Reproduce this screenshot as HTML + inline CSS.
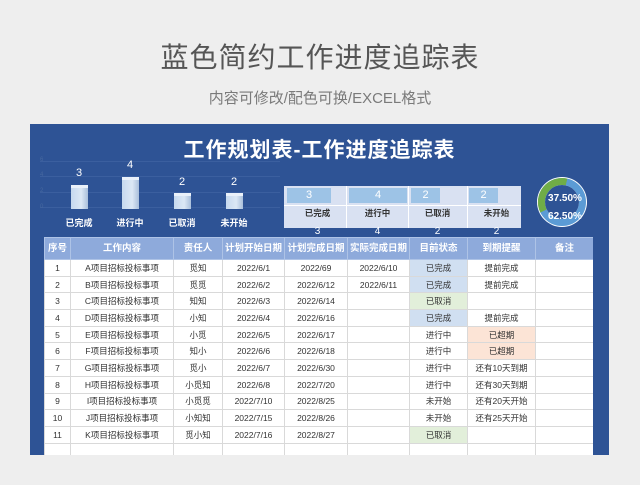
<!DOCTYPE html>
<html><head><meta charset="utf-8"><style>
*{margin:0;padding:0;box-sizing:border-box}
body{width:640px;height:485px;background:#eeeeee;font-family:"Liberation Sans","Noto Sans CJK SC",sans-serif;position:relative;overflow:hidden}
.a{position:absolute}
#t1{left:0;width:640px;top:36px;text-align:center;font-size:28px;color:#555;letter-spacing:1px}
#t2{left:0;width:640px;top:87px;text-align:center;font-size:15px;color:#7a7a7a}
#panel{left:30px;top:124px;width:579px;height:331px;background:#2e5395}
#ptitle{left:30px;width:579px;top:134px;text-align:center;font-size:21px;font-weight:bold;color:#fff;letter-spacing:1px}
.grid{left:40px;width:240px;height:1px;background:#3b5f9f}
.bar{width:17px;background:linear-gradient(90deg,#c6d9ef,#dce8f5 60%,#a9bfdb);border-top:3px solid #eaf1fa}
.bv{width:40px;text-align:center;color:#fff;font-size:11px;line-height:12px}
.bl{width:50px;text-align:center;color:#fff;font-size:9px;font-weight:bold;line-height:11px}
.ax{color:#46689f;font-size:6px;left:40px}
#tw{position:absolute;left:44px;top:237px;width:549px;height:218px;overflow:hidden}
table{border-collapse:collapse;width:549px;table-layout:fixed}
td,th{border:1px solid #d9d9d9;text-align:center;font-size:8.5px;color:#333;height:16.7px;line-height:14px;padding:0;white-space:nowrap;overflow:hidden;font-weight:normal}
th{background:#8eaadb;color:#fff;font-weight:bold;font-size:9.5px;height:22px;border-color:#aec3e6}
td{background:#fff}
.b{background:#d0dff1}.g{background:#e2efda}.o{background:#fce4d6}
.sb{background:#d9e1f2;left:284px;top:186px;width:237px;height:42px}
.sv{top:188px;height:15px;background:#9dc3e6;color:#fff;font-size:11px;text-align:center;line-height:15px}
.sl{top:208px;width:59px;text-align:center;font-size:8.5px;font-weight:bold;color:#333;line-height:11px}
.sn{top:227px;width:59px;text-align:center;font-size:10px;color:#fff;line-height:10px}
</style></head><body>
<div class="a" id="t1">蓝色简约工作进度追踪表</div>
<div class="a" id="t2">内容可修改/配色可换/EXCEL格式</div>
<div class="a" id="panel"></div>
<div class="a" id="ptitle">工作规划表-工作进度追踪表</div>
<div class="a grid" style="top:161px"></div><div class="a grid" style="top:176px"></div><div class="a grid" style="top:192px"></div><div class="a grid" style="top:207px"></div>
<div class="a ax" style="top:157px">6</div><div class="a ax" style="top:172px">4</div><div class="a ax" style="top:188px">2</div><div class="a ax" style="top:204px">0</div>
<div class="a bar" style="left:71px;top:185px;height:24px"></div>
<div class="a bar" style="left:122px;top:177px;height:32px"></div>
<div class="a bar" style="left:174px;top:193px;height:16px"></div>
<div class="a bar" style="left:226px;top:193px;height:16px"></div>
<div class="a bv" style="left:59px;top:167px">3</div><div class="a bv" style="left:110px;top:159px">4</div><div class="a bv" style="left:162px;top:176px">2</div><div class="a bv" style="left:214px;top:176px">2</div>
<div class="a bl" style="left:54px;top:218px">已完成</div><div class="a bl" style="left:105px;top:218px">进行中</div><div class="a bl" style="left:157px;top:218px">已取消</div><div class="a bl" style="left:209px;top:218px">未开始</div>
<div class="a sb"></div>
<div class="a" style="left:346px;top:186px;width:1px;height:42px;background:#fff"></div>
<div class="a" style="left:408px;top:186px;width:1px;height:42px;background:#fff"></div>
<div class="a" style="left:467px;top:186px;width:1px;height:42px;background:#fff"></div>
<div class="a" style="left:284px;top:205px;width:237px;height:1px;background:#fff"></div>
<div class="a sv" style="left:287px;width:44px">3</div>
<div class="a sv" style="left:349px;width:58px">4</div>
<div class="a sv" style="left:411px;width:29px">2</div>
<div class="a sv" style="left:469px;width:29px">2</div>
<div class="a sl" style="left:288px">已完成</div><div class="a sl" style="left:348px">进行中</div><div class="a sl" style="left:408px">已取消</div><div class="a sl" style="left:467px">未开始</div>
<div class="a sn" style="left:288px">3</div><div class="a sn" style="left:348px">4</div><div class="a sn" style="left:408px">2</div><div class="a sn" style="left:467px">2</div>
<svg class="a" style="left:535px;top:175px" width="55" height="55" viewBox="0 0 55 55">
<circle cx="27" cy="27" r="25" fill="#fff"/>
<circle cx="27" cy="27" r="20.5" fill="none" stroke="#5b9bd5" stroke-width="7"/>
<path d="M31.5 7 A20.5 20.5 0 0 0 8.5 36" fill="none" stroke="#70ad47" stroke-width="7"/>
<circle cx="27" cy="27" r="17" fill="#2e5395"/>
<text x="30" y="26" fill="#fff" font-size="10" font-weight="bold" text-anchor="middle" font-family="Liberation Sans">37.50%</text>
<text x="30" y="44" fill="#fff" font-size="10" font-weight="bold" text-anchor="middle" font-family="Liberation Sans">62.50%</text>
</svg>
<div id="tw"><table>
<colgroup><col style="width:26px"><col style="width:103px"><col style="width:49px"><col style="width:62px"><col style="width:63px"><col style="width:62px"><col style="width:58px"><col style="width:68px"><col style="width:58px"></colgroup>
<tr><th>序号</th><th>工作内容</th><th>责任人</th><th>计划开始日期</th><th>计划完成日期</th><th>实际完成日期</th><th>目前状态</th><th>到期提醒</th><th>备注</th></tr>
<tr><td>1</td><td>A项目招标投标事项</td><td>觅知</td><td>2022/6/1</td><td>2022/69</td><td>2022/6/10</td><td class="b">已完成</td><td>提前完成</td><td></td></tr>
<tr><td>2</td><td>B项目招标投标事项</td><td>觅觅</td><td>2022/6/2</td><td>2022/6/12</td><td>2022/6/11</td><td class="b">已完成</td><td>提前完成</td><td></td></tr>
<tr><td>3</td><td>C项目招标投标事项</td><td>知知</td><td>2022/6/3</td><td>2022/6/14</td><td></td><td class="g">已取消</td><td></td><td></td></tr>
<tr><td>4</td><td>D项目招标投标事项</td><td>小知</td><td>2022/6/4</td><td>2022/6/16</td><td></td><td class="b">已完成</td><td>提前完成</td><td></td></tr>
<tr><td>5</td><td>E项目招标投标事项</td><td>小觅</td><td>2022/6/5</td><td>2022/6/17</td><td></td><td>进行中</td><td class="o">已超期</td><td></td></tr>
<tr><td>6</td><td>F项目招标投标事项</td><td>知小</td><td>2022/6/6</td><td>2022/6/18</td><td></td><td>进行中</td><td class="o">已超期</td><td></td></tr>
<tr><td>7</td><td>G项目招标投标事项</td><td>觅小</td><td>2022/6/7</td><td>2022/6/30</td><td></td><td>进行中</td><td>还有10天到期</td><td></td></tr>
<tr><td>8</td><td>H项目招标投标事项</td><td>小觅知</td><td>2022/6/8</td><td>2022/7/20</td><td></td><td>进行中</td><td>还有30天到期</td><td></td></tr>
<tr><td>9</td><td>I项目招标投标事项</td><td>小觅觅</td><td>2022/7/10</td><td>2022/8/25</td><td></td><td>未开始</td><td>还有20天开始</td><td></td></tr>
<tr><td>10</td><td>J项目招标投标事项</td><td>小知知</td><td>2022/7/15</td><td>2022/8/26</td><td></td><td>未开始</td><td>还有25天开始</td><td></td></tr>
<tr><td>11</td><td>K项目招标投标事项</td><td>觅小知</td><td>2022/7/16</td><td>2022/8/27</td><td></td><td class="g">已取消</td><td></td><td></td></tr>
<tr><td style="height:16px"></td><td></td><td></td><td></td><td></td><td></td><td></td><td></td><td></td></tr>
</table></div>
</body></html>
